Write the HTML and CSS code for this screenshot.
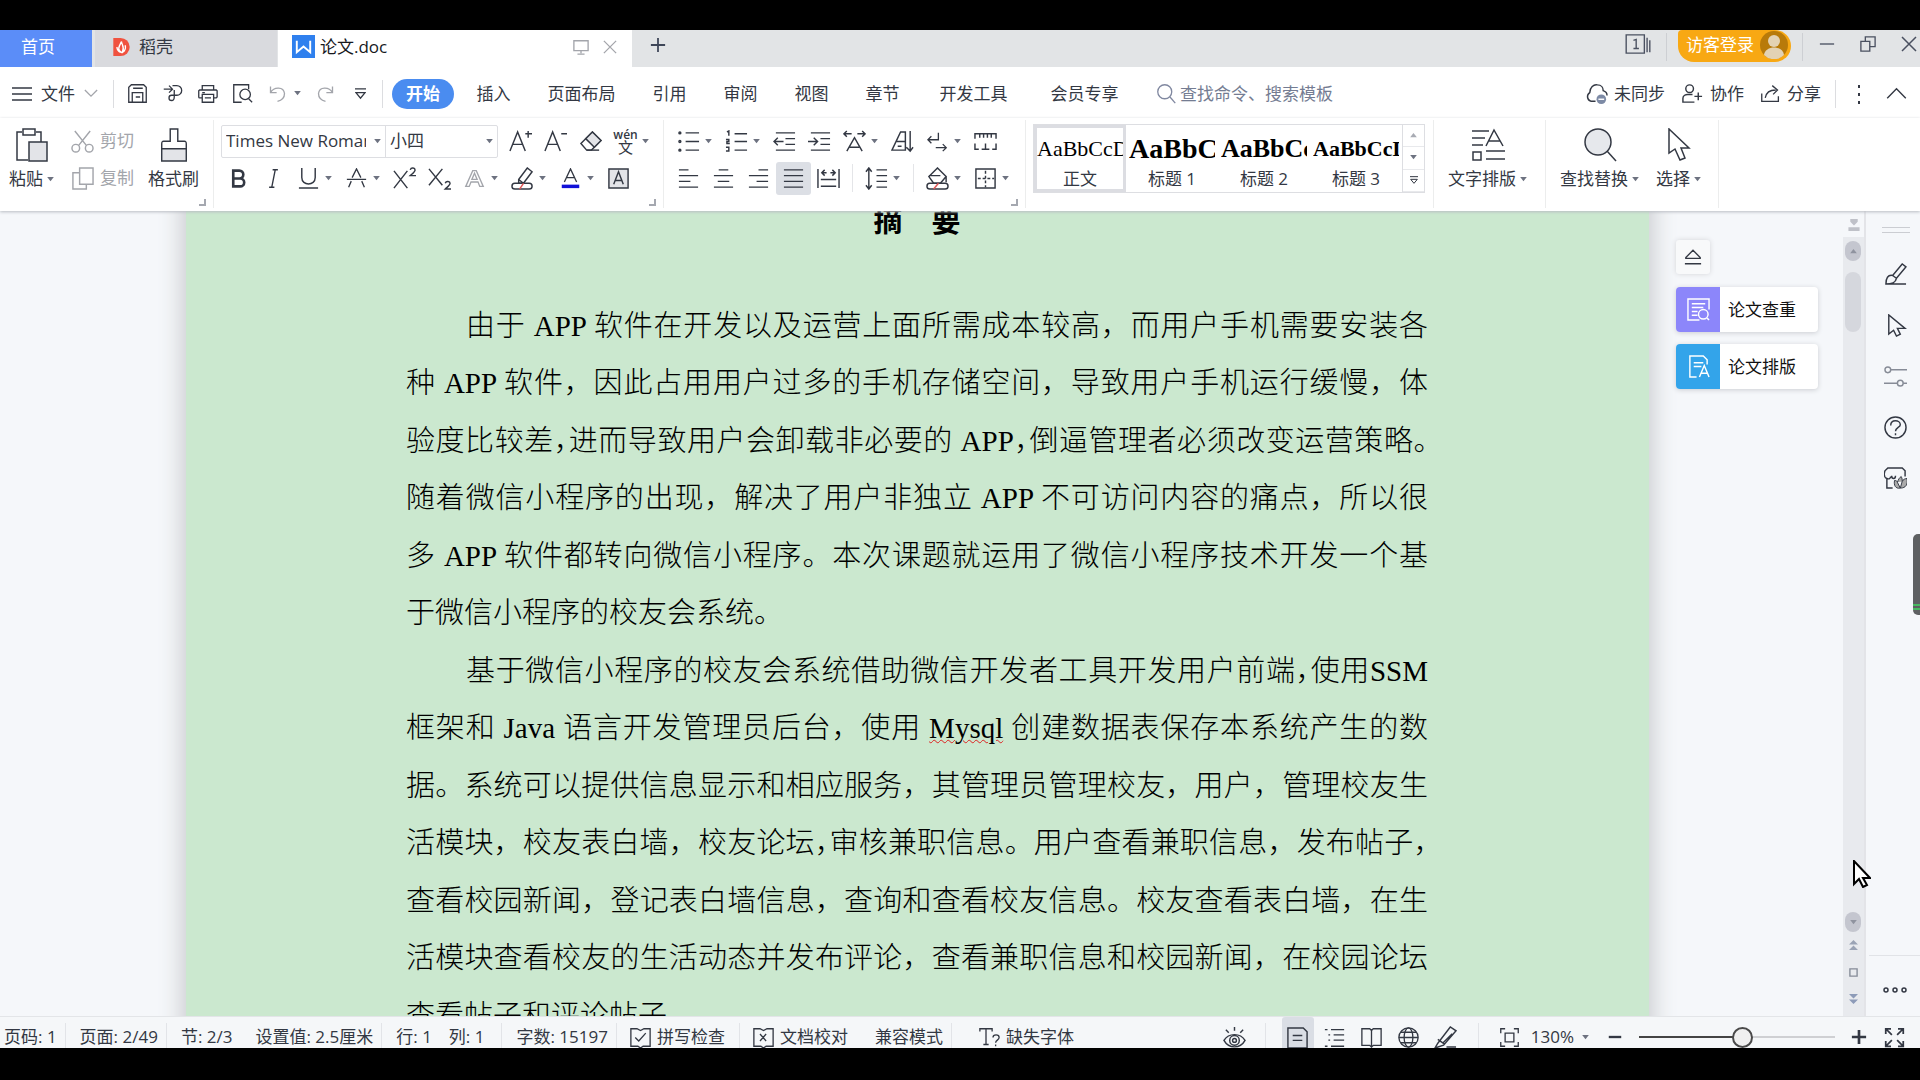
FILE: index.html
```html
<!DOCTYPE html>
<html lang="zh-CN">
<head>
<meta charset="utf-8">
<title>论文.doc</title>
<link rel="stylesheet" href="styles.css">
</head>
<body>
<svg class="defs" aria-hidden="true">
  <symbol id="caret" viewBox="0 0 8 6"><path d="M0 0h8L4 5z" fill="currentColor" stroke="none"/></symbol>
  <symbol id="caret-up" viewBox="0 0 8 6"><path d="M0 5h8L4 0z" fill="currentColor" stroke="none"/></symbol>
  <symbol id="chev-down" viewBox="0 0 16 10"><path d="M1 1l7 7 7-7"/></symbol>
  <symbol id="chev-up" viewBox="0 0 22 14"><path d="M1 12L11 2l10 10"/></symbol>
  <symbol id="menu" viewBox="0 0 20 16"><path d="M0 2h20M0 8h20M0 14h20"/></symbol>
  <symbol id="save" viewBox="0 0 24 24"><path d="M2 22V5l3-3h14l3 3v17zM7 6h11M6 22V11h12v11M10 16h5"/></symbol>
  <symbol id="export" viewBox="0 0 24 24"><path d="M2 7h9M8 3l4 4-4 4M12 3h5a5 5 0 010 11h-6a3 3 0 100 6c3 0 3-2 3-4V8"/></symbol>
  <symbol id="print" viewBox="0 0 24 24"><path d="M6 8V3h13v5M6 17H3a1 1 0 01-1-1V9l1-1h19l1 1v7l-1 1h-3M6 13h13v9H6zM6 11h3M9 17h7"/></symbol>
  <symbol id="preview" viewBox="0 0 24 24"><path d="M19 7V2H2v20h9"/><circle cx="15" cy="13" r="6"/><path d="M19 18l4 4"/></symbol>
  <symbol id="undo" viewBox="0 0 24 24"><path d="M4 4v7h7M4 11c4-7 15-7 16 1 0 5-4 8-8 9"/></symbol>
  <symbol id="redo" viewBox="0 0 24 24"><path d="M20 4v7h-7M20 11C16 4 5 4 4 12c0 5 4 8 8 9"/></symbol>
  <symbol id="more-bar" viewBox="0 0 12 14"><path d="M0 2h12M1 6h10l-5 6z"/></symbol>
  <symbol id="search" viewBox="0 0 22 24"><circle cx="9" cy="10" r="8"/><path d="M15 16l6 7"/></symbol>
  <symbol id="cloud" viewBox="0 0 24 24"><path d="M11 20H6a5 5 0 01-1-9c0-5 4-9 8-8 4 0 6 3 6 6 3 1 4 3 4 5"/><circle cx="17" cy="18" r="5" fill="#7d8aa5" stroke="none"/><path d="M14 18h6" stroke="#fff"/></symbol>
  <symbol id="people" viewBox="0 0 24 24"><circle cx="9" cy="7" r="4"/><path d="M14 21H2v-4c0-3 3-4 5-4h5M18 11v8M14 15h8"/></symbol>
  <symbol id="share" viewBox="0 0 24 24"><path d="M2 12v9h19v-6M6 17c1-6 5-9 12-9M14 3l6 5-5 5"/></symbol>
  <symbol id="dots-v" viewBox="0 0 4 20"><path d="M1 1h2v3H1zM1 9h2v3H1zM1 17h2v3H1z" fill="currentColor" stroke="none"/></symbol>
  <symbol id="screen" viewBox="0 0 18 18"><path d="M1 2h16v11H1zM9 13v3M5 17h8"/></symbol>
  <symbol id="close" viewBox="0 0 16 16"><path d="M1 1l14 14M15 1L1 15"/></symbol>
  <symbol id="plus" viewBox="0 0 18 18"><path d="M9 1v16M1 9h16"/></symbol>
  <symbol id="minus" viewBox="0 0 18 18"><path d="M1 9h16"/></symbol>
  <symbol id="restore" viewBox="0 0 18 18"><path d="M1 6h10v11H1zM6 6V1h11v11h-6"/></symbol>
  <symbol id="docer" viewBox="0 0 18 22"><path d="M0 1h8a10 10 0 010 20H0z" fill="#f0523f" stroke="none"/><path d="M9 17C4 14 6 11 9 5c0 4 4 5 1 12zM4 11c0 3 2 5 4 6M13 9c1 3 0 6-3 8" stroke="#fff" fill="none"/></symbol>
  <symbol id="wps" viewBox="0 0 24 24"><path d="M0 0h24v24H0z" fill="#2f80ee" stroke="none"/><path d="M5 6v12l7-6 7 6V6" stroke="#fff" stroke-width="2"/></symbol>
  <symbol id="tabs" viewBox="0 0 28 22"><path d="M1 1h20v20H1zM24 4v16M27 7v13"/><path d="M9 7l3-1v10M9 16h6"/></symbol>
  <symbol id="avatar" viewBox="0 0 28 28"><circle cx="14" cy="14" r="14" fill="#b87a0a" stroke="none"/><circle cx="14" cy="10" r="6" fill="#e3d2b4" stroke="none"/><path d="M4 24c1-10 19-10 20 0a14 14 0 01-20 0z" fill="#e3d2b4" stroke="none"/></symbol>
  <symbol id="paste" viewBox="0 0 32 34"><path d="M6 4H1v28h11M20 4h5v10M7 1h12v6H7z"/><path d="M13 14h18v19H13z" fill="#e3e4e8"/></symbol>
  <symbol id="cut" viewBox="0 0 24 24"><circle cx="5" cy="19" r="4"/><circle cx="19" cy="19" r="4"/><path d="M4 1l12 15M20 1L8 16"/></symbol>
  <symbol id="copy" viewBox="0 0 24 24"><path d="M9 1h14v17H9zM9 6H2v17h14v-5"/></symbol>
  <symbol id="brush" viewBox="0 0 28 36"><path d="M10 1h8v13h7c2 0 2 1 2 3v5H1v-5c0-2 0-3 2-3h7z"/><path d="M1 22h26v13H1z" fill="#e3e4e8"/></symbol>
  <symbol id="grow" viewBox="0 0 24 24"><path d="M1 22L9 2l8 20M4 15h10M20 1v7M17 4h7"/></symbol>
  <symbol id="shrink" viewBox="0 0 24 24"><path d="M1 22L9 2l8 20M4 15h10M18 4h6"/></symbol>
  <symbol id="eraser" viewBox="0 0 24 24"><path d="M2 14L14 2l9 9-10 10H8z"/><path d="M7 9l9 9 7-7-9-9z" fill="#e3e4e8"/><path d="M8 21h13"/></symbol>
  <symbol id="bold" viewBox="0 0 24 24"><path d="M6 3h7a4 4 0 010 9H6zM6 12h8a4 4 0 010 9H6z" stroke-width="3"/></symbol>
  <symbol id="italic" viewBox="0 0 24 24"><path d="M11 2h6M7 22h6M14 2l-4 20"/></symbol>
  <symbol id="underline" viewBox="0 0 24 24"><path d="M5 1v10c0 9 14 9 14 0V1M2 22h20"/></symbol>
  <symbol id="strike" viewBox="0 0 24 24"><path d="M7 11l5-10 5 10M1 13h22M6 15l-3 7M18 15l3 7"/></symbol>
  <symbol id="super" viewBox="0 0 24 24"><path d="M1 4l14 18M15 4L1 22M18 3c1-3 5-2 5 0s-3 4-5 6h6"/></symbol>
  <symbol id="sub" viewBox="0 0 24 24"><path d="M1 2l14 17M15 2L1 19M18 17c1-3 5-2 5 0s-3 4-5 6h6"/></symbol>
  <symbol id="outline-a" viewBox="0 0 24 24"><path d="M2 21L10 3h4l8 18h-4l-2-5H8l-2 5zM9 13h6l-3-7z"/></symbol>
  <symbol id="marker" viewBox="0 0 24 24"><path d="M8 13L17 1l5 4-9 12H8zM8 13l5 4"/><rect x="1" y="17" width="21" height="6" rx="3"/><path d="M9 23l4-6" stroke="#e05555"/></symbol>
  <symbol id="color-a" viewBox="0 0 24 24"><path d="M5 16l7-15 7 15M8 11h8"/><path d="M2 21h20" stroke="#1111d8" stroke-width="4"/></symbol>
  <symbol id="box-a" viewBox="0 0 24 24"><path d="M2 2h20v20H2z" fill="#e3e4e8"/><path d="M7 18l5-13 5 13M9 14h6"/></symbol>
  <symbol id="bullets" viewBox="0 0 24 24"><path d="M9 3h14M9 12h14M9 21h14"/><circle cx="3" cy="3" r="1"/><circle cx="3" cy="12" r="1"/><circle cx="3" cy="21" r="1"/></symbol>
  <symbol id="numbers" viewBox="0 0 24 24"><path d="M10 4h13M10 12h13M10 21h13M2 2l2-1v5M1 10h3v2H2v2h3M1 18h3v4H1"/></symbol>
  <symbol id="outdent" viewBox="0 0 24 24"><path d="M3 3h20M13 9h10M13 15h10M3 21h20M1 12h10M5 8l-4 4 4 4"/></symbol>
  <symbol id="indent" viewBox="0 0 24 24"><path d="M3 3h20M13 9h10M13 15h10M3 21h20M0 12h9M6 8l4 4-4 4"/></symbol>
  <symbol id="spread-a" viewBox="0 0 24 24"><path d="M4 22l8-14 8 14M7 18h10M1 4h8M4 1L1 4l3 3M15 4h8M20 1l3 3-3 3"/></symbol>
  <symbol id="sort" viewBox="0 0 24 24"><path d="M1 21L10 2h5v19zM6 12h9M7 17h4M20 1v21M16 18l4 4 3-4"/></symbol>
  <symbol id="wrap" viewBox="0 0 24 24"><path d="M13 2v8H1M5 6l-4 4 4 4M10 19h12M18 15l4 4-4 4"/></symbol>
  <symbol id="ruler" viewBox="0 0 24 24"><path d="M1 9V4h22v5M6 4v4M10 4v4M14 4v4M18 4v4M1 14v6h4M19 20h4v-6M8 20h8M12 14v6"/></symbol>
  <symbol id="al-left" viewBox="0 0 24 24"><path d="M2 3h10M2 9h20M2 15h12M2 21h20"/></symbol>
  <symbol id="al-center" viewBox="0 0 24 24"><path d="M7 3h10M2 9h20M6 15h12M2 21h20"/></symbol>
  <symbol id="al-right" viewBox="0 0 24 24"><path d="M12 3h10M2 9h20M10 15h12M2 21h20"/></symbol>
  <symbol id="al-just" viewBox="0 0 24 24"><path d="M2 3h20M2 9h20M2 15h20M2 21h20"/></symbol>
  <symbol id="al-dist" viewBox="0 0 24 24"><path d="M1 2v20M23 2v20M4 13h16M4 20h16M5 6h5M14 6h5M8 3L5 6l3 3M16 3l3 3-3 3"/></symbol>
  <symbol id="spacing" viewBox="0 0 24 24"><path d="M4 1v22M1 5l3-4 3 4M1 19l3 4 3-4M12 3h11M12 9h11M12 15h11M12 21h11"/></symbol>
  <symbol id="bucket" viewBox="0 0 24 24"><path d="M3 9h12M12 1l9 9-6 7H8L3 10zM21 10v6"/><rect x="1" y="17" width="22" height="6" rx="3"/><path d="M8 23l5-6" stroke="#e05555"/></symbol>
  <symbol id="border" viewBox="0 0 24 24"><path d="M2 2h20v20H2z"/><path d="M12 4v17M4 12h17" stroke-dasharray="3 2"/></symbol>
  <symbol id="typeset" viewBox="0 0 34 34"><path d="M1 3h17M1 10h13M1 17h11M15 23h19M15 31h19M2 24h8v8H2zM15 18l8-16 9 16M18 13h11"/></symbol>
  <symbol id="find" viewBox="0 0 34 34"><circle cx="15" cy="14" r="13" fill="#e6e8ec"/><path d="M24 23l9 10"/></symbol>
  <symbol id="arrow" viewBox="0 0 24 34"><path d="M2 1v24l6-4 5 11 5-2-4-10h8z"/></symbol>
  <symbol id="eject" viewBox="0 0 20 18"><path d="M10 1l8 8v1H2V9zM1 16h18"/></symbol>
  <symbol id="check-doc" viewBox="0 0 24 24"><path d="M23 12V1H1v22h12M5 6h14M5 10h12M5 14h6M5 18h6"/><circle cx="17" cy="17" r="5"/><path d="M21 21l2 2"/></symbol>
  <symbol id="format-doc" viewBox="0 0 24 24"><path d="M10 23H3V1h14l4 4v5M7 8h10M7 12h8M13 23l5-12 5 12M15 19h6"/></symbol>
  <symbol id="pen" viewBox="0 0 24 24"><path d="M9 13L19 1l4 3-10 12zM9 13c-5-1-7 3-7 9h21M2 22c5 0 10-1 11-6"/></symbol>
  <symbol id="arrow-s" viewBox="0 0 24 24"><path d="M5 1v20l5-4 3 6 4-2-3-6h8z"/></symbol>
  <symbol id="sliders" viewBox="0 0 24 24"><circle cx="4" cy="5" r="3"/><path d="M7 5h17M0 19h14M20 19h4"/><circle cx="17" cy="19" r="3"/></symbol>
  <symbol id="help" viewBox="0 0 24 24"><circle cx="12" cy="12" r="11"/><path d="M7 10c0-7 10-6 10-1 0 3-5 3-5 7M12 18v2"/></symbol>
  <symbol id="shop" viewBox="0 0 24 24"><path d="M3 12v10h6M3 12c-3-1-3-5-2-8l3-3h15l3 3v6M3 12c2 1 4 0 4-2M8 9c0 4 4 4 4 0"/><path d="M17 22c-5 1-7-3-6-8 2 0 3 1 3 2 1-3 2-5 4-6 1 2 1 3 1 5 1-2 3-3 5-3 1 6-1 10-7 10zM14 16l3 6 2-7" fill="#aaa" stroke-width="1"/></symbol>
  <symbol id="dots-h" viewBox="0 0 24 8"><circle cx="3" cy="4" r="2"/><circle cx="12" cy="4" r="2"/><circle cx="21" cy="4" r="2"/></symbol>
  <symbol id="ruler-mark" viewBox="0 0 12 14"><path d="M2 0h8v3L6 7 2 3zM0 9h12v4H0z" fill="#bfc1c8" stroke="none"/></symbol>
  <symbol id="dbl-up" viewBox="0 0 10 12"><path d="M0 5l5-5 5 5zM0 11l5-5 5 5z" fill="#9aa3b5" stroke="none"/></symbol>
  <symbol id="dbl-down" viewBox="0 0 10 12"><path d="M0 0h10L5 5zM0 6h10l-5 5z" fill="#8d9bb8" stroke="none"/></symbol>
  <symbol id="square" viewBox="0 0 10 10"><path d="M1 1h8v8H1z"/></symbol>
  <symbol id="spell" viewBox="0 0 24 24"><path d="M8 2H1v20h8l3 2 3-2h8V2h-7l-4 2zM6 12l4 4 8-9"/></symbol>
  <symbol id="proof" viewBox="0 0 24 24"><path d="M8 2H1v20h8l3 2 3-2h8V2h-7l-4 2zM8 8l7 8M15 8l-7 8"/></symbol>
  <symbol id="missing" viewBox="0 0 24 24"><path d="M1 5V2h14v3M8 2v18M5 20h6M16 12c0-4 7-4 7 0 0 3-4 3-4 6M19 20v2"/></symbol>
  <symbol id="eye" viewBox="0 0 24 24"><path d="M1 15c5-8 17-8 22 0-5 9-17 9-22 0zM12 1v4M3 4l3 3M21 4l-3 3"/><circle cx="12" cy="15" r="5"/><circle cx="12" cy="15" r="2"/></symbol>
  <symbol id="v-page" viewBox="0 0 24 24"><path d="M2 2h16l4 4v17H2zM7 10h10M7 15h10"/></symbol>
  <symbol id="v-outline" viewBox="0 0 24 24"><path d="M1 3h3M8 3h15M5 9h2M11 9h12M5 15h2M11 15h12M1 22h3M8 22h15"/></symbol>
  <symbol id="v-book" viewBox="0 0 24 24"><path d="M1 2h9l2 2 2-2h9v19h-9l-2 2-2-2H1zM12 4v19"/></symbol>
  <symbol id="v-globe" viewBox="0 0 24 24"><circle cx="12" cy="12" r="11"/><ellipse cx="12" cy="12" rx="5" ry="11"/><path d="M1 12h22M3 6h18M3 18h18"/></symbol>
  <symbol id="v-pen" viewBox="0 0 24 24"><path d="M4 18L17 1l6 4L10 20l-9 3zM4 14l7 5M19 8L9 18M13 22h10"/></symbol>
  <symbol id="fit" viewBox="0 0 24 24"><path d="M2 7V2h5M17 2h5v5M22 17v5h-5M7 22H2v-5M7 7h10v10H7z"/></symbol>
  <symbol id="full" viewBox="0 0 24 24"><path d="M2 8V2h6M2 2l7 7M16 2h6v6M22 2l-7 7M22 16v6h-6M22 22l-7-7M8 22H2v-6M2 22l7-7"/></symbol>
  <symbol id="pointer" viewBox="0 0 18 28"><path d="M1 1v23l5-5 4 8 4-2-4-7h7z" fill="#fff" stroke="#000" stroke-width="2"/></symbol>
</svg>

<div class="app">
  <header class="tabbar">
    <button class="tab home">首页</button>
    <button class="tab docer"><svg class="i i-docer"><use href="#docer"/></svg>稻壳</button>
    <button class="tab current"><svg class="i i-wps"><use href="#wps"/></svg>论文.doc<span class="fill"></span><svg class="i s18 pale"><use href="#screen"/></svg><svg class="i s14 pale"><use href="#close"/></svg></button>
    <button class="newtab" aria-label="新建"><svg class="i s18 thick"><use href="#plus"/></svg></button>
    <span class="fill"></span>
    <button class="win tabs" aria-label="窗口"><svg class="i i-tabs"><use href="#tabs"/></svg></button>
    <span class="vline"></span>
    <button class="login">访客登录<svg class="i i-avatar"><use href="#avatar"/></svg></button>
    <span class="vline"></span>
    <div class="winbtns">
      <button class="win" aria-label="最小化"><svg class="i s18"><use href="#minus"/></svg></button>
      <button class="win" aria-label="还原"><svg class="i s18"><use href="#restore"/></svg></button>
      <button class="win" aria-label="关闭"><svg class="i s18"><use href="#close"/></svg></button>
    </div>
  </header>

  <nav class="menubar">
    <button class="file"><svg class="i i-menu"><use href="#menu"/></svg>文件<svg class="i i-chev pale"><use href="#chev-down"/></svg></button>
    <span class="vline"></span>
    <div class="quick">
      <button class="tool" aria-label="保存"><svg class="i s22"><use href="#save"/></svg></button>
      <button class="tool" aria-label="输出"><svg class="i s22"><use href="#export"/></svg></button>
      <button class="tool" aria-label="打印"><svg class="i s22"><use href="#print"/></svg></button>
      <button class="tool" aria-label="预览"><svg class="i s22"><use href="#preview"/></svg></button>
      <button class="tool drop pale" aria-label="撤销"><svg class="i s22"><use href="#undo"/></svg><svg class="i caret"><use href="#caret"/></svg></button>
      <button class="tool pale" aria-label="恢复"><svg class="i s22"><use href="#redo"/></svg></button>
      <button class="tool" aria-label="更多"><svg class="i i-more"><use href="#more-bar"/></svg></button>
    </div>
    <span class="vline"></span>
    <div class="menus">
      <button class="active">开始</button><button>插入</button><button>页面布局</button><button>引用</button><button>审阅</button><button>视图</button><button>章节</button><button class="wide">开发工具</button><button class="wide">会员专享</button>
    </div>
    <label class="search"><svg class="i s22"><use href="#search"/></svg><input type="text" placeholder="查找命令、搜索模板" aria-label="查找命令"></label>
    <span class="fill"></span>
    <div class="cloud">
      <button><svg class="i s24"><use href="#cloud"/></svg>未同步</button>
      <button><svg class="i s24"><use href="#people"/></svg>协作</button>
      <button><svg class="i s22"><use href="#share"/></svg>分享</button>
    </div>
    <span class="vline"></span>
    <button class="dots" aria-label="更多"><svg class="i i-dotsv"><use href="#dots-v"/></svg></button>
    <button class="fold" aria-label="折叠"><svg class="i i-fold"><use href="#chev-up"/></svg></button>
  </nav>

  <div class="ribbon">
    <section class="group clip">
      <button class="big paste"><svg class="i i-big"><use href="#paste"/></svg><span>粘贴<svg class="i caret"><use href="#caret"/></svg></span></button>
      <div class="stack">
        <button class="row pale"><svg class="i s24"><use href="#cut"/></svg>剪切</button>
        <button class="row pale"><svg class="i s24"><use href="#copy"/></svg>复制</button>
      </div>
      <button class="big"><svg class="i i-big"><use href="#brush"/></svg><span>格式刷</span></button>
      <i class="corner"></i>
    </section>
    <section class="group font">
      <div class="row">
        <div class="combo">
          <label class="face"><select aria-label="字体"><option>Times New Roman</option></select><svg class="i caret"><use href="#caret"/></svg></label>
          <label class="size"><select aria-label="字号"><option>小四</option></select><svg class="i caret"><use href="#caret"/></svg></label>
        </div>
        <button class="tool" aria-label="增大字号"><svg class="i s24"><use href="#grow"/></svg></button>
        <button class="tool" aria-label="减小字号"><svg class="i s24"><use href="#shrink"/></svg></button>
        <button class="tool" aria-label="清除格式"><svg class="i s24"><use href="#eraser"/></svg></button>
        <button class="tool drop" aria-label="拼音指南"><span class="pinyin"><small>wén</small><b>文</b></span><svg class="i caret"><use href="#caret"/></svg></button>
      </div>
      <div class="row">
        <button class="tool" aria-label="加粗"><svg class="i s22"><use href="#bold"/></svg></button>
        <button class="tool" aria-label="倾斜"><svg class="i s22"><use href="#italic"/></svg></button>
        <button class="tool drop" aria-label="下划线"><svg class="i s24"><use href="#underline"/></svg><svg class="i caret"><use href="#caret"/></svg></button>
        <button class="tool drop" aria-label="删除线"><svg class="i s22"><use href="#strike"/></svg><svg class="i caret"><use href="#caret"/></svg></button>
        <button class="tool" aria-label="上标"><svg class="i s24"><use href="#super"/></svg></button>
        <button class="tool" aria-label="下标"><svg class="i s24"><use href="#sub"/></svg></button>
        <button class="tool drop pale" aria-label="文字效果"><svg class="i s22"><use href="#outline-a"/></svg><svg class="i caret"><use href="#caret"/></svg></button>
        <button class="tool drop" aria-label="突出显示"><svg class="i s24"><use href="#marker"/></svg><svg class="i caret"><use href="#caret"/></svg></button>
        <button class="tool drop" aria-label="字体颜色"><svg class="i s22"><use href="#color-a"/></svg><svg class="i caret"><use href="#caret"/></svg></button>
        <button class="tool" aria-label="字符底纹"><svg class="i s24"><use href="#box-a"/></svg></button>
      </div>
      <i class="corner"></i>
    </section>
    <section class="group para">
      <div class="row">
        <button class="tool drop" aria-label="项目符号"><svg class="i s24"><use href="#bullets"/></svg><svg class="i caret"><use href="#caret"/></svg></button>
        <button class="tool drop" aria-label="编号"><svg class="i s24"><use href="#numbers"/></svg><svg class="i caret"><use href="#caret"/></svg></button>
        <button class="tool" aria-label="减少缩进"><svg class="i s24"><use href="#outdent"/></svg></button>
        <button class="tool" aria-label="增加缩进"><svg class="i s24"><use href="#indent"/></svg></button>
        <button class="tool drop" aria-label="中文版式"><svg class="i s24"><use href="#spread-a"/></svg><svg class="i caret"><use href="#caret"/></svg></button>
        <button class="tool" aria-label="排序"><svg class="i s24"><use href="#sort"/></svg></button>
        <button class="tool drop" aria-label="换行"><svg class="i s22"><use href="#wrap"/></svg><svg class="i caret"><use href="#caret"/></svg></button>
        <button class="tool" aria-label="制表位"><svg class="i s24"><use href="#ruler"/></svg></button>
      </div>
      <div class="row">
        <button class="tool" aria-label="左对齐"><svg class="i s24"><use href="#al-left"/></svg></button>
        <button class="tool" aria-label="居中"><svg class="i s24"><use href="#al-center"/></svg></button>
        <button class="tool" aria-label="右对齐"><svg class="i s24"><use href="#al-right"/></svg></button>
        <button class="tool on" aria-label="两端对齐"><svg class="i s24"><use href="#al-just"/></svg></button>
        <button class="tool" aria-label="分散对齐"><svg class="i s24"><use href="#al-dist"/></svg></button>
        <span class="mid"></span>
        <button class="tool drop" aria-label="行距"><svg class="i s24"><use href="#spacing"/></svg><svg class="i caret"><use href="#caret"/></svg></button>
        <span class="mid"></span>
        <button class="tool drop" aria-label="底纹"><svg class="i s24"><use href="#bucket"/></svg><svg class="i caret"><use href="#caret"/></svg></button>
        <button class="tool drop" aria-label="边框"><svg class="i s24"><use href="#border"/></svg><svg class="i caret"><use href="#caret"/></svg></button>
      </div>
      <i class="corner"></i>
    </section>
    <section class="group styles">
      <div class="gallery">
        <button class="style on"><span class="sample">AaBbCcDd</span>正文</button>
        <button class="style"><span class="sample h1">AaBbCcDd</span>标题 1</button>
        <button class="style"><span class="sample h2">AaBbCcDd</span>标题 2</button>
        <button class="style"><span class="sample h3">AaBbCcDd</span>标题 3</button>
        <div class="steps">
          <button aria-label="上一行"><svg class="i caret"><use href="#caret-up"/></svg></button>
          <button aria-label="下一行"><svg class="i caret"><use href="#caret"/></svg></button>
          <button aria-label="展开"><svg class="i i-step"><use href="#more-bar"/></svg></button>
        </div>
      </div>
    </section>
    <section class="group layout">
      <button class="big"><svg class="i i-big"><use href="#typeset"/></svg><span>文字排版<svg class="i caret"><use href="#caret"/></svg></span></button>
    </section>
    <section class="group edit">
      <button class="big"><svg class="i i-big"><use href="#find"/></svg><span>查找替换<svg class="i caret"><use href="#caret"/></svg></span></button>
      <button class="big"><svg class="i i-big"><use href="#arrow"/></svg><span>选择<svg class="i caret"><use href="#caret"/></svg></span></button>
    </section>
  </div>

  <main class="work">
    <div class="desk">
      <article class="paper">
        <h1>摘　要</h1>
        <p>
          <span class="line first">由于 APP 软件在开发以及运营上面所需成本较高，而用户手机需要安装各</span>
          <span class="line">种 APP 软件，因此占用用户过多的手机存储空间，导致用户手机运行缓慢，体</span>
          <span class="line">验度比较差<i>，</i>进而导致用户会卸载非必要的 APP<i>，</i>倒逼管理者必须改变运营策略<i>。</i></span>
          <span class="line">随着微信小程序的出现，解决了用户非独立 APP 不可访问内容的痛点，所以很</span>
          <span class="line">多 APP 软件都转向微信小程序。本次课题就运用了微信小程序技术开发一个基</span>
          <span class="line last">于微信小程序的校友会系统。</span>
        </p>
        <p>
          <span class="line first">基于微信小程序的校友会系统借助微信开发者工具开发用户前端<i>，</i>使用SSM</span>
          <span class="line">框架和 Java 语言开发管理员后台，使用 <u>Mysql</u> 创建数据表保存本系统产生的数</span>
          <span class="line">据。系统可以提供信息显示和相应服务，其管理员管理校友，用户，管理校友生</span>
          <span class="line">活模块，校友表白墙，校友论坛<i>，</i>审核兼职信息。用户查看兼职信息，发布帖子<i>，</i></span>
          <span class="line">查看校园新闻，登记表白墙信息，查询和查看校友信息。校友查看表白墙，在生</span>
          <span class="line">活模块查看校友的生活动态并发布评论，查看兼职信息和校园新闻，在校园论坛</span>
          <span class="line last">查看帖子和评论帖子</span>
        </p>
      </article>
      <aside class="cards">
        <button class="eject" aria-label="收起"><svg class="i i-eject"><use href="#eject"/></svg></button>
        <button class="card violet"><span class="pic"><svg class="i s24"><use href="#check-doc"/></svg></span>论文查重</button>
        <button class="card blue"><span class="pic"><svg class="i s24"><use href="#format-doc"/></svg></span>论文排版</button>
      </aside>
    </div>
    <div class="scroll">
      <div class="mark"><svg class="i i-mark"><use href="#ruler-mark"/></svg></div>
      <div class="rail">
        <button class="knob" aria-label="向上"><svg class="i caret"><use href="#caret-up"/></svg></button>
        <span class="thumb"></span>
        <span class="fill"></span>
        <button class="knob" aria-label="向下"><svg class="i caret"><use href="#caret"/></svg></button>
        <button class="jump" aria-label="上一页"><svg class="i i-jump"><use href="#dbl-up"/></svg></button>
        <button class="jump" aria-label="选择浏览对象"><svg class="i i-jump"><use href="#square"/></svg></button>
        <button class="jump" aria-label="下一页"><svg class="i i-jump"><use href="#dbl-down"/></svg></button>
      </div>
      <svg class="pointer"><use href="#pointer"/></svg>
    </div>
    <aside class="side">
      <span class="grip"></span>
      <button aria-label="样式"><svg class="i s24"><use href="#pen"/></svg></button>
      <button aria-label="选择"><svg class="i s24"><use href="#arrow-s"/></svg></button>
      <button class="muted" aria-label="属性"><svg class="i s24"><use href="#sliders"/></svg></button>
      <button aria-label="帮助"><svg class="i s24"><use href="#help"/></svg></button>
      <button aria-label="商店"><svg class="i s24"><use href="#shop"/></svg></button>
      <span class="fill"></span>
      <button class="foot" aria-label="更多"><svg class="i i-dotsh"><use href="#dots-h"/></svg></button>
      <span class="edge"></span>
    </aside>
  </main>

  <footer class="status">
    <span class="cell">页码: 1</span><span class="vline"></span>
    <span class="cell">页面: 2/49</span><span class="vline"></span>
    <span class="cell">节: 2/3</span><span class="cell open">设置值: 2.5厘米</span><span class="vline"></span>
    <span class="cell">行: 1</span><span class="cell near">列: 1</span><span class="vline"></span>
    <span class="cell">字数: 15197</span><span class="vline"></span>
    <button class="cell"><svg class="i s22"><use href="#spell"/></svg>拼写检查</button><span class="vline"></span>
    <button class="cell"><svg class="i s22"><use href="#proof"/></svg>文档校对</button><button class="cell plain">兼容模式</button><span class="vline"></span>
    <button class="cell gap"><svg class="i s22"><use href="#missing"/></svg>缺失字体</button>
    <span class="fill"></span>
    <button class="view eye" aria-label="护眼模式"><svg class="i s24"><use href="#eye"/></svg></button><span class="vline"></span>
    <div class="views">
      <button class="view on" aria-label="页面视图"><svg class="i s24"><use href="#v-page"/></svg></button>
      <button class="view" aria-label="大纲"><svg class="i s22"><use href="#v-outline"/></svg></button>
      <button class="view" aria-label="阅读版式"><svg class="i s22"><use href="#v-book"/></svg></button>
      <button class="view" aria-label="Web 版式"><svg class="i s22"><use href="#v-globe"/></svg></button>
      <button class="view" aria-label="写作模式"><svg class="i s24"><use href="#v-pen"/></svg></button>
    </div>
    <span class="vline"></span>
    <button class="zoom"><svg class="i s22"><use href="#fit"/></svg>130%<svg class="i caret"><use href="#caret"/></svg></button>
    <button class="view" aria-label="缩小"><svg class="i s14 heavy"><use href="#minus"/></svg></button>
    <input class="slider" type="range" min="0" max="100" value="53" aria-label="缩放">
    <button class="view" aria-label="放大"><svg class="i s16 heavy"><use href="#plus"/></svg></button>
    <button class="view full" aria-label="全屏"><svg class="i s22 thick"><use href="#full"/></svg></button>
  </footer>
</div>
</body>
</html>
```

FILE: styles.css
```css
* { box-sizing: border-box; }

body {
  margin: 0;
  background: #000;
  color: #333843;
  font: 17px/24px "Open Sans", "Noto Sans CJK SC", sans-serif;
}

button, input, select {
  margin: 0;
  padding: 0;
  border: 0;
  background: none;
  color: inherit;
  font: inherit;
}

button { white-space: nowrap; }

.defs { display: none; }

.app {
  display: flex;
  flex-direction: column;
  height: 100vh;
  padding: 30px 0 32px;
  overflow: hidden;
}

.fill { flex: 1; }

/* icons */
.i {
  flex: none;
  fill: none;
  stroke: currentColor;
  stroke-width: 1.5;
  overflow: visible;
}
.s14 { width: 14px; height: 14px; }
.s16 { width: 16px; height: 16px; }
.s18 { width: 16px; height: 16px; }
.s22 { width: 21px; height: 21px; }
.s24 { width: 23px; height: 23px; }
.thick { stroke-width: 2; }
.heavy { stroke-width: 3; }
.caret { width: 7px; height: 5px; color: #6d7280; }
.i-docer { width: 17px; height: 20px; }
.i-wps { width: 23px; height: 23px; }
.i-tabs { width: 28px; height: 20px; }
.i-avatar { width: 28px; height: 28px; }
.i-menu { width: 20px; height: 16px; }
.i-chev { width: 14px; height: 9px; }
.i-more { width: 11px; height: 13px; }
.i-step { width: 8px; height: 10px; }
.i-big { width: 34px; height: 34px; }
.i-fold { width: 21px; height: 13px; }
.i-dotsv { width: 4px; height: 20px; }
.i-eject { width: 18px; height: 17px; }
.i-mark { width: 12px; height: 13px; }
.i-jump { width: 9px; height: 11px; }
.i-dotsh { width: 24px; height: 8px; }
.pale { color: #a3a5ab; }

.vline {
  flex: none;
  width: 1px;
  height: 28px;
  background: #dcdde0;
}

/* tab strip */
.tabbar {
  display: flex;
  flex: none;
  height: 37px;
  background: #e2e4e6;
}
.tab {
  display: flex;
  align-items: center;
  padding-bottom: 4px;
}
.home {
  width: 92px;
  margin-right: 3px;
  padding-left: 21px;
  background: #5b8df8;
  color: #fff;
}
.docer {
  gap: 9px;
  width: 182px;
  margin-right: 1px;
  padding-left: 18px;
  background: #d9dade;
}
.current {
  gap: 5px;
  width: 354px;
  padding: 0 15px 4px 14px;
  background: #fff;
  color: #16181d;
}
.current .s18 { margin-right: 9px; }
.newtab {
  width: 52px;
  padding-bottom: 4px;
  color: #3e4658;
}
.tabbar .vline { margin-top: 3px; background: #cdcfd3; }
.tabs { margin-right: 14px; padding-bottom: 4px; }
.login {
  display: flex;
  align-items: center;
  gap: 6px;
  height: 32px;
  margin: 0 11px;
  padding: 0 3px 2px 8px;
  border-radius: 4px 16px 16px 16px;
  background: #f8a813;
  color: #fff;
}
.winbtns {
  display: flex;
  gap: 25px;
  padding: 0 3px 5px 16px;
}
.win { color: #4a5060; }

/* menu bar */
.menubar {
  display: flex;
  flex: none;
  align-items: center;
  height: 51px;
  padding-top: 2px;
  background: #fff;
}
.file {
  display: flex;
  align-items: center;
  gap: 9px;
  width: 113px;
  padding-left: 12px;
}
.quick { display: flex; width: 268px; padding-left: 6px; }
.tool {
  display: flex;
  flex: none;
  align-items: center;
  justify-content: center;
  width: 35px;
  height: 33px;
}
.drop { justify-content: flex-start; width: 48px; padding-left: 6px; }
.drop .caret { margin-left: 5px; }
.drop .s22 { margin: 0 1px; }
.menus { display: flex; padding-left: 9px; }
.menus button { width: 71px; height: 30px; }
.menus button:nth-child(3) { width: 105px; }
.menus .wide { width: 111px; }
.menus .active {
  width: 62px;
  margin-right: 4px;
  border-radius: 15px;
  background: #4a8cf0;
  color: #fff;
  font-weight: 700;
}
.search {
  display: flex;
  align-items: center;
  gap: 3px;
  padding-left: 16px;
  color: #8088a0;
}
.search input { width: 200px; outline: 0; }
.search input::placeholder { color: #747c92; opacity: 1; }
.cloud { display: flex; gap: 16px; margin-right: 14px; }
.cloud button { display: flex; align-items: center; gap: 6px; }
.dots { display: flex; justify-content: center; width: 46px; }
.fold { width: 38px; text-align: left; padding-left: 4px; }

/* ribbon */
.ribbon {
  position: relative;
  z-index: 1;
  display: flex;
  flex: none;
  height: 93px;
  background: #fff;
  box-shadow: 0 1px 3px #b8bcc2;
}
.group {
  position: relative;
  display: flex;
  flex: none;
  margin-top: 2px;
  margin-bottom: 3px;
  padding-top: 3px;
  border-right: 1px solid #eceded;
}
.clip { width: 214px; }
.font { width: 450px; }
.para { width: 362px; }
.styles { width: 408px; }
.layout { width: 112px; }
.edit { width: 173px; }
.row { display: flex; align-items: center; height: 36px; }
.font, .para { flex-direction: column; gap: 1px; padding-left: 7px; }
.corner {
  position: absolute;
  right: 7px;
  bottom: 2px;
  width: 7px;
  height: 7px;
  border: solid #a5a8b0;
  border-width: 0 2px 2px 0;
}
.big {
  display: flex;
  flex-direction: column;
  align-items: center;
  gap: 5px;
  padding: 5px 0 0 14px;
}
.big span { display: flex; align-items: center; gap: 4px; }
.big + .big { padding-left: 17px; }
.paste { padding-left: 9px; }
.stack { display: flex; flex-direction: column; gap: 1px; padding-left: 17px; }
.stack .row { gap: 6px; }
.combo {
  display: flex;
  height: 33px;
  margin-right: 5px;
  border: 1px solid #dddee2;
  border-radius: 2px;
}
.combo label { display: flex; align-items: center; padding: 0 4px; }
.combo select { appearance: none; flex: 1; min-width: 0; overflow: hidden; outline: 0; }
.face { width: 164px; border-right: 1px solid #dddee2; }
.face select { margin-right: 8px; }
.size { width: 111px; }
.pinyin {
  display: flex;
  flex-direction: column;
  align-items: center;
  width: 23px;
}
.pinyin small { font-size: 12px; line-height: 11px; font-weight: 600; }
.pinyin b { font-size: 15px; line-height: 14px; font-weight: 400; }
.tool.on { border-radius: 3px; background: #dcdfe5; }
.mid { width: 1px; height: 28px; margin: 0 6px; background: #e4e5e8; }

.styles { padding: 4px 7px 0 7px; }
.gallery { display: flex; height: 69px; border: 1px solid #dddee2; }
.style {
  display: flex;
  flex-direction: column;
  align-items: center;
  width: 92px;
  padding-top: 7px;
  border: 3px solid transparent;
  line-height: 20px;
  overflow: hidden;
}
.style.on { border-color: #dcdde2; }
.sample {
  align-self: stretch;
  height: 34px;
  overflow: hidden;
  color: #000;
  font: 22px/28px "Liberation Serif", serif;
  text-align: left;
}
.h1 { font-size: 28px; font-weight: 700; }
.h2 { font-size: 26px; font-weight: 700; }
.h3 { font-size: 22px; font-weight: 700; }
.steps {
  display: grid;
  grid-template-rows: repeat(3, 1fr);
  width: 22px;
  border-left: 1px solid #dddee2;
}
.steps button {
  display: flex;
  align-items: center;
  justify-content: center;
  border-bottom: 1px solid #e8e9ec;
}
.steps button:first-child .caret { color: #a8abb3; }

/* work area */
.work {
  display: flex;
  flex: 1;
  min-height: 0;
  background: #f5f7fa;
}
.desk {
  display: grid;
  flex: 1;
  grid-template-columns: 186px minmax(0, 1fr) 194px;
  overflow: hidden;
}
.paper {
  grid-column: 2;
  align-self: start;
  min-height: 120vh;
  margin-top: -17px;
  padding: 0 221px 0 220px;
  background: #cbe8cf;
  box-shadow: 0 0 22px 4px #c9cbce;
  color: #000;
  font: 300 29px/57px "Liberation Serif", "Noto Sans CJK SC", serif;
}
.paper h1 {
  margin: 0 0 47px;
  font-size: 29px;
  font-weight: 700;
  text-align: center;
}
.paper p { margin: 0; }
.line {
  display: block;
  text-align-last: justify;
  white-space: nowrap;
}
.line:nth-child(even) { padding-bottom: 1px; }
.first { padding-left: 60px; }
.last { text-align-last: left; }
.line i { font-style: normal; font-feature-settings: "halt" 1; }
.line u { text-decoration: underline wavy #d22 1px; }

.cards {
  display: flex;
  flex-direction: column;
  align-items: flex-start;
  padding: 29px 0 0 27px;
}
.eject {
  display: flex;
  align-items: center;
  justify-content: center;
  width: 34px;
  height: 34px;
  margin-bottom: 13px;
  border-radius: 3px;
  background: #f8f9fa;
  box-shadow: 0 0 5px #d3d5d8;
}
.card {
  display: flex;
  align-items: center;
  gap: 8px;
  width: 142px;
  height: 45px;
  margin-bottom: 12px;
  border-radius: 4px;
  background: #fff;
  box-shadow: 0 1px 5px #cbcdd2;
  color: #111;
  overflow: hidden;
}
.pic {
  display: flex;
  align-items: center;
  justify-content: center;
  width: 44px;
  height: 45px;
  color: #fff;
}
.violet .pic { background: #8c86fa; }
.blue .pic { background: #33a4ea; }

.scroll {
  position: relative;
  display: flex;
  flex-direction: column;
  width: 23px;
  border-right: 2px solid #e3e4e8;
}
.mark { height: 26px; padding: 8px 0 0 5px; line-height: 0; }
.rail {
  display: flex;
  flex: 1;
  flex-direction: column;
  padding: 4px 3px 3px 2px;
  background: #e8eaee;
}
.knob {
  display: flex;
  align-items: center;
  justify-content: center;
  height: 20px;
  border-radius: 8px;
  background: #c4c6cf;
}
.knob .caret { color: #8f939f; }
.thumb {
  height: 60px;
  margin-top: 11px;
  border-radius: 8px;
  background: #d5d7dd;
}
.jump { height: 27px; line-height: 0; color: #858b98; }
.pointer {
  position: absolute;
  left: 10px;
  top: 649px;
  width: 18px;
  height: 28px;
}

.side {
  position: relative;
  display: flex;
  flex-direction: column;
  width: 54px;
}
.side button {
  display: flex;
  align-items: center;
  justify-content: center;
  height: 51px;
  padding-left: 4px;
}
.side .muted { color: #878c97; }
.side .foot {
  height: 61px;
  margin-left: 3px;
  padding: 8px 0 0;
  border-top: 1px solid #e1e3e7;
}
.grip {
  height: 6px;
  margin: 16px 10px 16px 16px;
  border: solid #cbcdd2;
  border-width: 1px 0;
}
.edge {
  position: absolute;
  right: 0;
  top: 323px;
  width: 7px;
  height: 81px;
  border-radius: 5px 0 0 5px;
  background: linear-gradient(#5e6062 70px, #48b860 70px 72px, #5e6062 72px 74px, #48b860 74px 76px, #5e6062 76px);
}

/* status bar */
.status {
  display: flex;
  flex: none;
  align-items: center;
  height: 32px;
  padding: 9px 10px 0 0;
  border-top: 1px solid #e3e5e8;
  background: #f5f7f9;
  overflow: hidden;
}
.status .vline { background: #e2e4e8; }
.cell { display: flex; align-items: center; gap: 6px; flex: none; padding: 0 8px 0 14px; white-space: nowrap; }
.cell:first-child { padding-left: 4px; }
.open { padding-left: 15px; }
.near { padding-left: 9px; padding-right: 17px; }
button.cell { padding-right: 14px; padding-left: 13px; }
button.plain { padding-right: 8px; }
button.gap { padding-left: 27px; }
.eye { margin-right: 14px; }
.views { display: flex; gap: 5px; padding: 0 16px; }
.view { display: flex; align-items: center; justify-content: center; width: 32px; height: 40px; }
.view.on { border-radius: 3px; background: #dadee5; }
.full { margin-left: 3px; }
.zoom { display: flex; align-items: center; gap: 11px; padding: 0 10px 0 20px; }
.zoom .caret { margin-left: -3px; }
.slider {
  appearance: none;
  width: 196px;
  height: 22px;
  margin: 0 8px;
  background: linear-gradient(90deg, #444 53%, #cfd0d3 53%) center / 100% 2px no-repeat;
}
.slider::-webkit-slider-thumb {
  appearance: none;
  width: 21px;
  height: 21px;
  border: 2px solid #4a4a4a;
  border-radius: 50%;
  background: #f0f0f0;
}
```
